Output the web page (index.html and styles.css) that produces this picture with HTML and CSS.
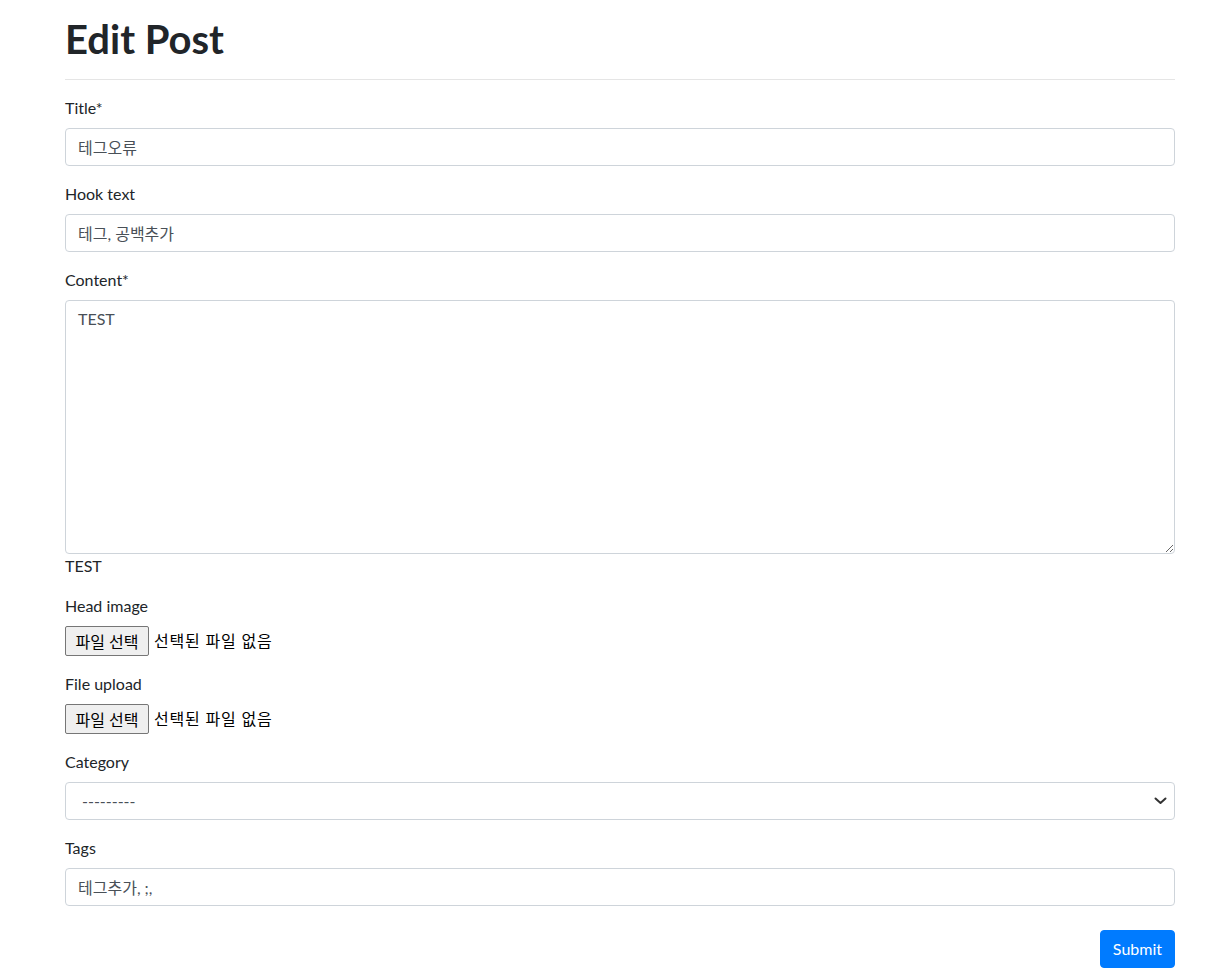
FILE: index.html
```html
<!DOCTYPE html>
<html lang="ko">
<head>
  <meta charset="UTF-8" />
  <meta name="viewport" content="width=device-width, initial-scale=1" />
  <title>Edit Post</title>
  <link rel="stylesheet" href="styles.css">
</head>
<body>

  <div class="container">
    <h1>Edit Post</h1>
    <hr>

    <form class="post-form">
      <div class="form-group">
        <label for="title">Title*</label>
        <input type="text" id="title" class="form-control" value="테그오류" />
      </div>

      <div class="form-group">
        <label for="hook">Hook text</label>
        <input type="text" id="hook" class="form-control" value="테그, 공백추가" />
      </div>

      <div class="form-group">
        <label for="content">Content*</label>
        <textarea id="content" class="form-control content-area">TEST</textarea>
        <div class="preview">TEST</div>
      </div>

      <div class="form-group">
        <label>Head image</label>
        <div class="file-field">
          <button type="button" class="file-btn">파일 선택</button>
          <span class="file-name">선택된 파일 없음</span>
        </div>
      </div>

      <div class="form-group">
        <label>File upload</label>
        <div class="file-field">
          <button type="button" class="file-btn">파일 선택</button>
          <span class="file-name">선택된 파일 없음</span>
        </div>
      </div>

      <div class="form-group">
        <label for="category">Category</label>
        <div class="select-wrap">
          <select id="category" class="form-control select-box">
            <option>---------</option>
          </select>
          <svg class="chevron" width="13" height="8" viewBox="0 0 13 8">
            <path d="M1.5 1.5 6.5 6l5-4.5" fill="none" stroke="#333" stroke-width="2" stroke-linecap="round" stroke-linejoin="round"/>
          </svg>
        </div>
      </div>

      <div class="form-group">
        <label for="tags">Tags</label>
        <input type="text" id="tags" class="form-control" value="테그추가, ;," />
      </div>

      <div class="actions">
        <button type="submit" class="btn-submit">Submit</button>
      </div>
    </form>
  </div>

</body>
</html>
```

FILE: styles.css
```css
body {
  margin: 0;
  font-family: Lato, "Noto Sans CJK KR", sans-serif;
  font-size: 16px;
  line-height: 1.5;
  color: #212529;
  background-color: #fff;
}
.container {
  width: 1110px;
  padding: 15px 0 0 65px;
}
h1 {
  margin: 0 0 8px;
  font-size: 40px;
  font-weight: 700;
  line-height: 1.2;
}
hr {
  margin: 16px 0;
  border: 0;
  border-top: 1px solid rgba(0, 0, 0, 0.1);
}
.form-group {
  margin-bottom: 16px;
}
label {
  display: inline-block;
  margin-bottom: 8px;
}
.form-control {
  display: block;
  box-sizing: border-box;
  width: 100%;
  height: 38px;
  padding: 6px 12px;
  font-family: inherit;
  font-size: 16px;
  line-height: 1.5;
  color: #495057;
  background-color: #fff;
  border: 1px solid #ced4da;
  border-radius: 4px;
  margin: 0;
}
.content-area {
  height: 254px;
  resize: vertical;
}
.file-field {
  display: flex;
  align-items: center;
  gap: 5px;
  height: 30px;
}
.file-btn {
  height: 30px;
  width: 84px;
  padding: 0;
  font-family: inherit;
  font-size: 16px;
  color: #000;
  background-color: #efefef;
  border: 1px solid #767676;
  border-radius: 2px;
}
.file-name {
  color: #000;
  letter-spacing: 0.8px;
}
.select-wrap {
  position: relative;
}
.select-box {
  appearance: none;
  padding-left: 16px;
}
.chevron {
  position: absolute;
  right: 8px;
  top: 15px;
}
.actions {
  display: flex;
  justify-content: flex-end;
  padding-top: 8px;
}
.btn-submit {
  height: 38px;
  padding: 6px 12px;
  font-family: inherit;
  font-size: 16px;
  line-height: 1.5;
  color: #fff;
  background-color: #007bff;
  border: 1px solid #007bff;
  border-radius: 4px;
}
```
